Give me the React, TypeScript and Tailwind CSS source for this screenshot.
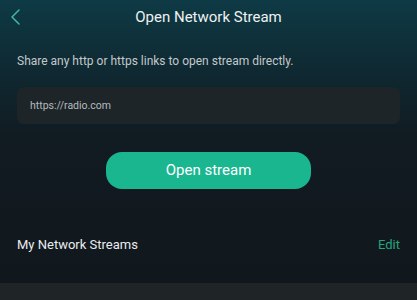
export default function App() {
  return (
    <div
      className="relative w-[417px] h-[300px] overflow-hidden flex flex-col bg-[linear-gradient(180deg,#0e3a45_0%,#0f2a33_22%,#111b22_45%,#11171c_100%)]"
      style={{ fontFamily: "Roboto, 'Noto Sans', sans-serif" }}
    >
      {/* Header */}
      <div className="relative h-[34px] flex items-center justify-center">
        <button className="absolute left-[9px] top-[7px] text-[#3fb6a8]">
          <svg width="14" height="20" viewBox="0 0 14 20" fill="none" stroke="currentColor" strokeWidth="1.5" strokeLinecap="round" strokeLinejoin="round">
            <polyline points="10,3 3,10 10,17" />
          </svg>
        </button>
        <h1 className="text-[15px] text-[#eef1f2] leading-none">Open Network Stream</h1>
      </div>

      <div className="px-[17px] flex flex-col">
        <p className="mt-[20px] text-[12px] text-[#c3c8cb] leading-[14px]">
          Share any http or https links to open stream directly.
        </p>

        <div className="mt-[19px] h-[37px] rounded-[7px] bg-[#1e2529] flex items-center px-[13px]">
          <span className="text-[10.5px] text-[#b5babd]">https://radio.com</span>
        </div>

        <div className="mt-[28px] flex justify-center">
          <button className="w-[205px] h-[37px] rounded-[16px] bg-[#1ab68f] text-white text-[15px]">
            Open stream
          </button>
        </div>

        <div className="mt-[46px] flex items-center justify-between">
          <span className="text-[13px] text-[#e9ecee]">My Network Streams</span>
          <span className="text-[13px] text-[#27a380]">Edit</span>
        </div>
      </div>

      <div className="mt-auto h-[17px] bg-[#1f2427]" />
    </div>
  );
}
